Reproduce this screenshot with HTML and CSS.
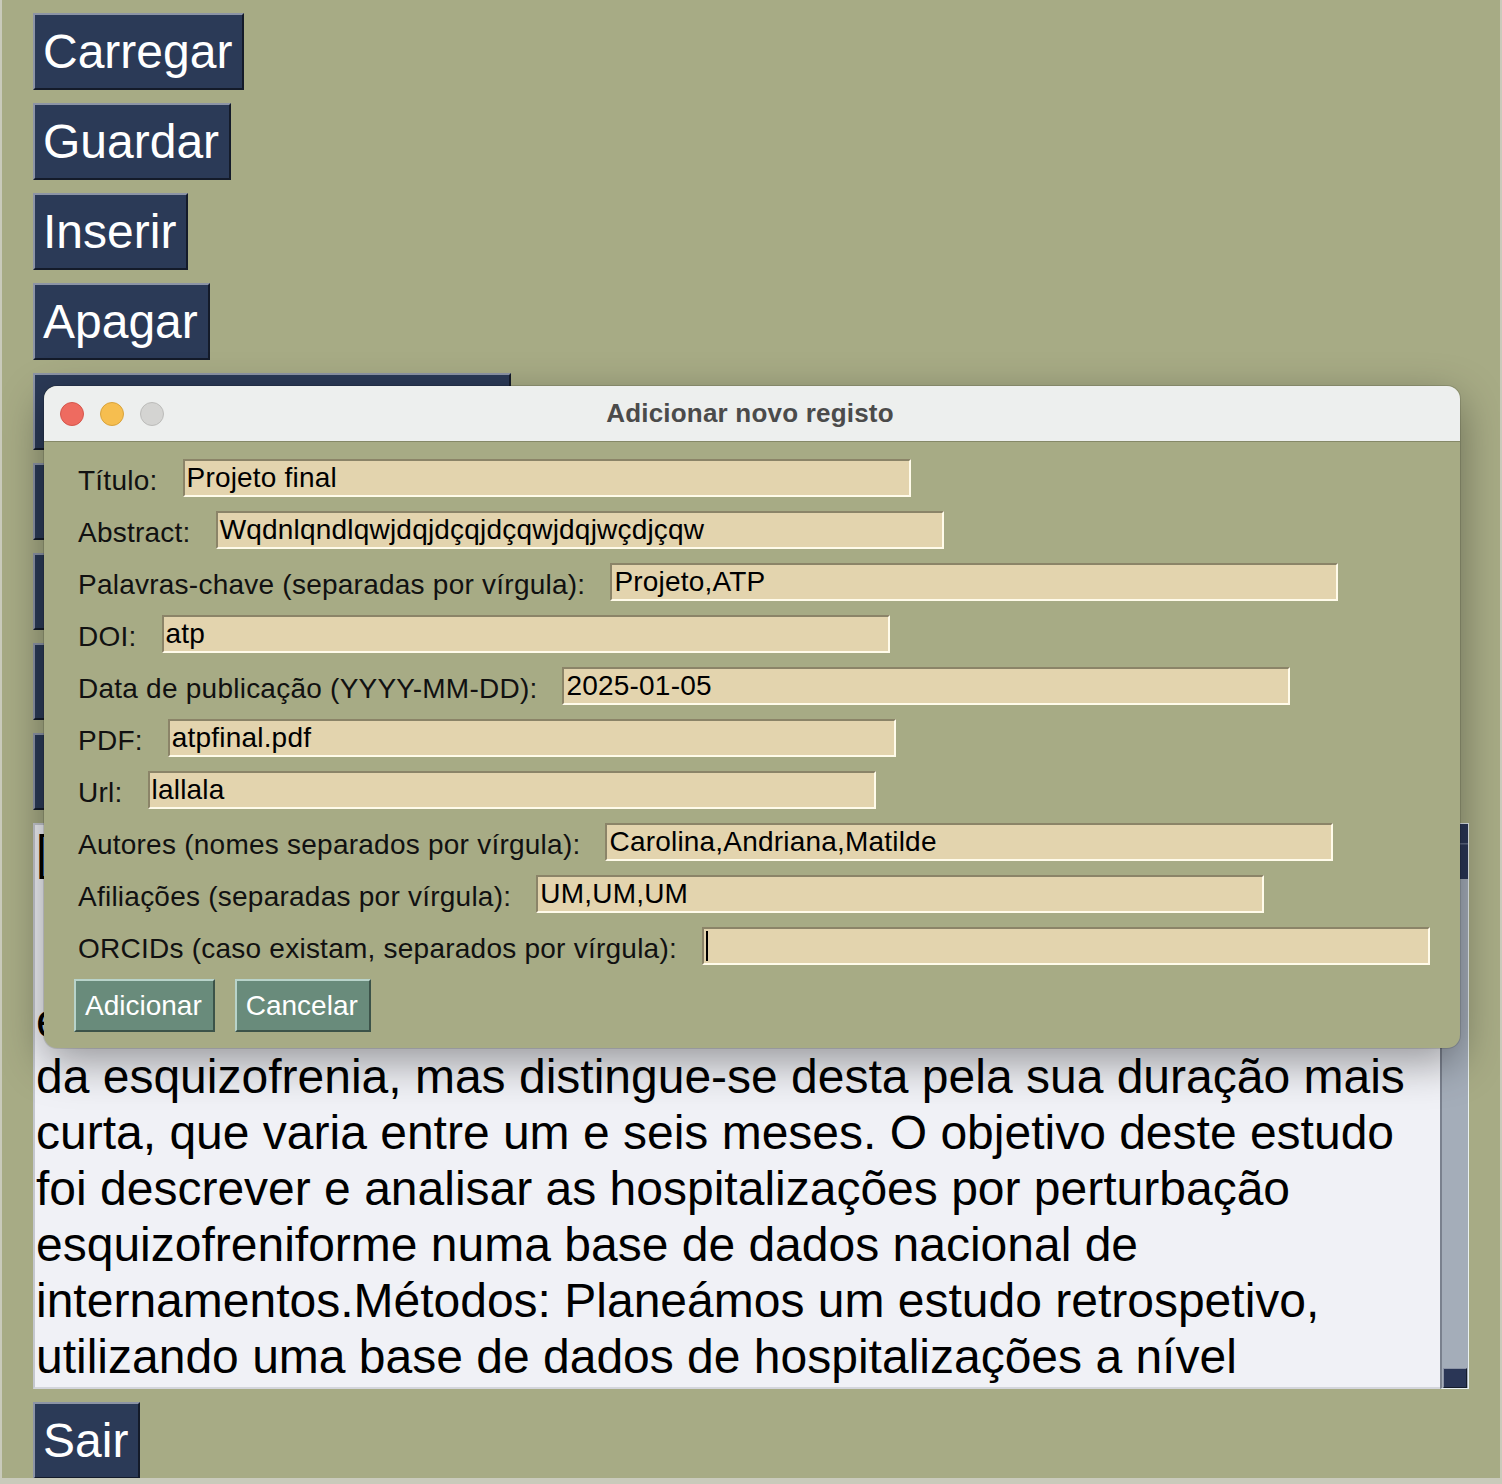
FILE: index.html
```html
<!DOCTYPE html>
<html lang="pt">
<head>
<meta charset="utf-8">
<title>Gestor de publicações</title>
<link rel="stylesheet" href="styles.css">
</head>
<body>
<div class="app">
  <div class="main">
    <button class="btn">Carregar</button>
    <button class="btn">Guardar</button>
    <button class="btn">Inserir</button>
    <button class="btn">Apagar</button>
    <button class="btn">Pesquisar publicação</button>
    <button class="btn">Pesquisar</button>
    <button class="btn">Editar</button>
    <button class="btn">Estatísticas</button>
    <button class="btn">Relatório</button>
    <div class="textbox">
      <div class="text">
        <div class="line">[Introdução: A perturbação esquizofreniforme é uma</div>
        <div class="line indent">doença psiquiátrica grave, cuja apresentação clínica</div>
        <div class="line indent">inclui sintomas psicóticos. Esta perturbação</div>
        <div class="line">esquizofreniforme apresenta sintomas semelhantes aos</div>
        <div class="line">da esquizofrenia, mas distingue-se desta pela sua duração mais</div>
        <div class="line">curta, que varia entre um e seis meses. O objetivo deste estudo</div>
        <div class="line">foi descrever e analisar as hospitalizações por perturbação</div>
        <div class="line">esquizofreniforme numa base de dados nacional de</div>
        <div class="line">internamentos.Métodos: Planeámos um estudo retrospetivo,</div>
        <div class="line">utilizando uma base de dados de hospitalizações a nível</div>
      </div>
      <div class="scrollbar">
        <div class="thumb-top"></div>
        <div class="thumb-main"></div>
        <div class="track"></div>
        <div class="arrow"></div>
      </div>
    </div>
    <button class="btn">Sair</button>
  </div>

  <div class="dialog">
    <div class="titlebar">
      <div class="lights">
        <span class="light red"></span>
        <span class="light yellow"></span>
        <span class="light gray"></span>
      </div>
      <div class="title">Adicionar novo registo</div>
      <div></div>
    </div>
    <div class="form">
      <div class="row"><span class="label">Título:</span><div class="entry">Projeto final</div></div>
      <div class="row"><span class="label">Abstract:</span><div class="entry">Wqdnlqndlqwjdqjdçqjdçqwjdqjwçdjçqw</div></div>
      <div class="row"><span class="label">Palavras-chave (separadas por vírgula):</span><div class="entry">Projeto,ATP</div></div>
      <div class="row"><span class="label">DOI:</span><div class="entry">atp</div></div>
      <div class="row"><span class="label">Data de publicação (YYYY-MM-DD):</span><div class="entry">2025-01-05</div></div>
      <div class="row"><span class="label">PDF:</span><div class="entry">atpfinal.pdf</div></div>
      <div class="row"><span class="label">Url:</span><div class="entry">lallala</div></div>
      <div class="row"><span class="label">Autores (nomes separados por vírgula):</span><div class="entry">Carolina,Andriana,Matilde</div></div>
      <div class="row"><span class="label">Afiliações (separadas por vírgula):</span><div class="entry">UM,UM,UM</div></div>
      <div class="row"><span class="label">ORCIDs (caso existam, separados por vírgula):</span><div class="entry"><span class="cursor"></span></div></div>
      <div class="actions">
        <button class="dbtn">Adicionar</button>
        <button class="dbtn">Cancelar</button>
      </div>
    </div>
  </div>
</div>
</body>
</html>
```

FILE: styles.css
```css
* { box-sizing: border-box; }

html, body {
  margin: 0;
  padding: 0;
}

body {
  background: #c9cabb;
  width: 1502px;
  height: 1484px;
  overflow: hidden;
  font-family: "Liberation Sans", Arial, Helvetica, sans-serif;
}

.app {
  position: relative;
  margin-left: 2px;
  width: 1498px;
  height: 1478px;
  background: #a7ab85;
  overflow: hidden;
}

.main {
  display: flex;
  flex-direction: column;
  align-items: flex-start;
  gap: 13px;
  padding: 13px 0 0 31px;
}

.btn {
  font-family: "Liberation Sans", Arial, Helvetica, sans-serif;
  font-size: 48px;
  line-height: 55px;
  color: #ffffff;
  background: #2b3a57;
  border: 2px solid;
  border-color: #8c94a6 #141b2a #141b2a #8c94a6;
  padding: 9px 10px 9px 8px;
  margin: 0;
  white-space: nowrap;
}

.textbox {
  display: flex;
  width: 1436px;
  height: 566px;
}

.text {
  flex: 1;
  background: #f0f1f6;
  border-top: 2px solid #c4c7ce;
  border-left: 2px solid #c4c7ce;
  border-bottom: 2px solid #d3d5db;
  padding: 0 2px 0 1px;
  font-size: 48px;
  line-height: 56px;
  color: #000;
  overflow: hidden;
}

.line {
  white-space: nowrap;
}

.line.indent {
  padding-left: 14px;
}

.scrollbar {
  width: 29px;
  display: flex;
  flex-direction: column;
  background: #a4adb9;
  border-left: 2px solid #7a818e;
  border-right: 1px solid #e9f1f1;
  border-top: 1px solid #dfe5ea;
  border-bottom: 1px solid #e9f1f1;
}

.thumb-top {
  height: 20px;
  background: #2a3656;
  border-bottom: 1px solid #5c6782;
}

.thumb-main {
  height: 35px;
  background: #2a3656;
  border-top: 1px solid #44506d;
}

.track {
  flex: 1;
}

.arrow {
  height: 20px;
  margin: 0 1px 0 1px;
  background: #2a3656;
  border: 1px solid;
  border-color: #8c94a6 #141b2a #141b2a #8c94a6;
}

/* dialog */
.dialog {
  position: absolute;
  left: 42px;
  top: 386px;
  width: 1416px;
  height: 662px;
  border-radius: 13px;
  background: #a7ab85;
  overflow: hidden;
  box-shadow: 0 14px 44px rgba(0, 0, 0, 0.38), 0 0 0 1px rgba(0, 0, 0, 0.12);
}

.titlebar {
  height: 56px;
  background: #edefee;
  border-bottom: 1px solid #858867;
  display: grid;
  grid-template-columns: 1fr auto 1fr;
  align-items: center;
}

.lights {
  display: flex;
  gap: 16px;
  padding-left: 16px;
}

.light {
  width: 24px;
  height: 24px;
  border-radius: 50%;
  display: block;
}

.light.red { background: #ee6b60; border: 1px solid #d5564c; }
.light.yellow { background: #f6be4f; border: 1px solid #d9a33b; }
.light.gray { background: #d4d4d2; border: 1px solid #bcbcba; }

.title {
  font-size: 26px;
  font-weight: bold;
  color: #4b4b4b;
  letter-spacing: 0.2px;
  padding-right: 4px;
}

.form {
  display: flex;
  flex-direction: column;
  align-items: flex-start;
  gap: 14px;
  padding: 17px 0 0 34px;
}

.row {
  display: flex;
  align-items: center;
  gap: 25px;
  height: 38px;
}

.label {
  font-size: 28px;
  color: #111;
  white-space: nowrap;
  letter-spacing: 0.24px;
  margin-top: 5px;
}

.entry {
  width: 728px;
  height: 38px;
  background: #e3d4ae;
  border: 2px solid;
  border-color: #8b8468 #fffbea #fffbea #8b8468;
  font-size: 28px;
  line-height: 32px;
  padding: 0 3px 0 2px;
  color: #000;
  white-space: nowrap;
  letter-spacing: 0.2px;
  display: flex;
  align-items: center;
}

.cursor {
  display: block;
  width: 2px;
  height: 30px;
  background: #000;
}

.actions {
  display: flex;
  gap: 20px;
  margin-left: -4px;
}

.dbtn {
  font-family: "Liberation Sans", Arial, Helvetica, sans-serif;
  font-size: 28px;
  line-height: 33px;
  color: #fff;
  background: #698b7b;
  border: 2px solid;
  border-color: #b8d3ca #3c5349 #3c5349 #b8d3ca;
  padding: 8px 11px 8px 9px;
  margin: 0;
}
```
